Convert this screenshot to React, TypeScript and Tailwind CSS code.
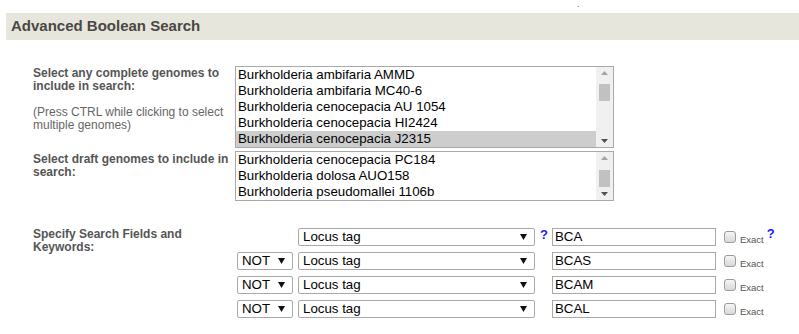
import React from "react";

const completeGenomes = [
  "Burkholderia ambifaria AMMD",
  "Burkholderia ambifaria MC40-6",
  "Burkholderia cenocepacia AU 1054",
  "Burkholderia cenocepacia HI2424",
  "Burkholderia cenocepacia J2315",
];

const draftGenomes = [
  "Burkholderia cenocepacia PC184",
  "Burkholderia dolosa AUO158",
  "Burkholderia pseudomallei 1106b",
];

const searchRows = [
  { op: null, value: "BCA" },
  { op: "NOT", value: "BCAS" },
  { op: "NOT", value: "BCAM" },
  { op: "NOT", value: "BCAL" },
];

function ListBox({ items, selected, thumbTop }: { items: string[]; selected?: number; thumbTop: string }) {
  return (
    <div className="flex w-[379px] border border-[#a9a9a9] bg-white">
      <ul className="flex-1">
        {items.map((item, i) => (
          <li
            key={item}
            className={
              "h-4 pl-[2px] leading-4 text-[13.3px] text-black " + (i === selected ? "bg-[#cdcdcd]" : "")
            }
          >
            {item}
          </li>
        ))}
      </ul>
      <div className="relative flex w-[17px] flex-col items-center justify-between bg-[#f0f0f0] py-[4px]">
        <svg width="7" height="4" viewBox="0 0 7 4">
          <path d="M0 4 L3.5 0 L7 4 Z" fill="#a3a3a3" />
        </svg>
        <div className={"absolute left-[3px] h-[17px] w-[11px] bg-[#c1c1c1] " + thumbTop} />
        <svg width="7" height="4" viewBox="0 0 7 4">
          <path d="M0 0 L3.5 4 L7 0 Z" fill="#505050" />
        </svg>
      </div>
    </div>
  );
}

function FakeSelect({ label, width }: { label: string; width: string }) {
  return (
    <div
      className={
        "flex h-[18px] items-center justify-between rounded-[2px] border border-[#a9a9a9] bg-white pl-[4px] pr-[7px] text-[13.3px] text-black " +
        width
      }
    >
      <span>{label}</span>
      <svg width="7" height="6" viewBox="0 0 7 6">
        <path d="M0 0 L7 0 L3.5 6 Z" fill="#111" />
      </svg>
    </div>
  );
}

function Help() {
  return <span className="text-[13px] font-bold leading-none text-[#1a1aff]">?</span>;
}

export default function App() {
  return (
    <div className="h-[334px] w-[799px] overflow-hidden bg-white font-['Liberation_Sans',Arial,sans-serif]">
      <div className="h-[13px] pl-[577px] text-[9px] leading-[8px] text-[#555]">.</div>
      <div className="ml-[6px] flex h-[27px] items-center bg-[#e6e6dc] pl-[5px]">
        <h1 className="text-[15px] font-bold text-[#4a4744]">Advanced Boolean Search</h1>
      </div>

      <div className="mt-[26px] flex">
        <div className="w-[235px] pl-[33px] pt-[1px] text-[12px] leading-[13px] text-[#555]">
          <p className="w-[190px] font-bold">Select any complete genomes to include in search:</p>
          <p className="mt-[13px] w-[196px] text-[#666]">(Press CTRL while clicking to select multiple genomes)</p>
        </div>
        <ListBox items={completeGenomes} selected={4} thumbTop="top-[17px]" />
      </div>

      <div className="mt-[3px] flex">
        <div className="w-[235px] pl-[33px] pt-[2px] text-[12px] leading-[13px] text-[#555]">
          <p className="w-[196px] font-bold">Select draft genomes to include in search:</p>
        </div>
        <ListBox items={draftGenomes} thumbTop="top-[18px]" />
      </div>

      <div className="mt-[27px] flex">
        <div className="w-[237px] pl-[33px] text-[12px] leading-[13px] text-[#555]">
          <p className="w-[160px] font-bold">Specify Search Fields and Keywords:</p>
        </div>
        <div className="flex flex-col gap-[6px]">
          {searchRows.map((row, i) => (
            <div key={row.value} className="flex h-[18px] items-center">
              <div className="w-[61px]">
                {row.op && <FakeSelect label={row.op} width="w-[56px]" />}
              </div>
              <FakeSelect label="Locus tag" width="w-[237px]" />
              <div className="flex h-[18px] w-[17px] items-start pl-[5px]">{i === 0 && <Help />}</div>
              <input
                readOnly
                value={row.value}
                className="h-[18px] w-[164px] border border-[#a9a9a9] bg-white px-[2px] text-[13.3px] text-black outline-none"
              />
              <div className="ml-[8px] flex h-[18px] items-center">
                <span className="h-[12px] w-[12px] rounded-[3px] border border-[#9a9a9a] bg-gradient-to-b from-[#f4f4f4] to-[#d8d8d8]" />
                <span className="ml-[4px] translate-y-[3px] text-[9.5px] leading-none text-[#555]">Exact</span>
                <span className="ml-[3px] w-[8px] -translate-y-[4px]">{i === 0 && <Help />}</span>
              </div>
            </div>
          ))}
        </div>
      </div>
    </div>
  );
}
